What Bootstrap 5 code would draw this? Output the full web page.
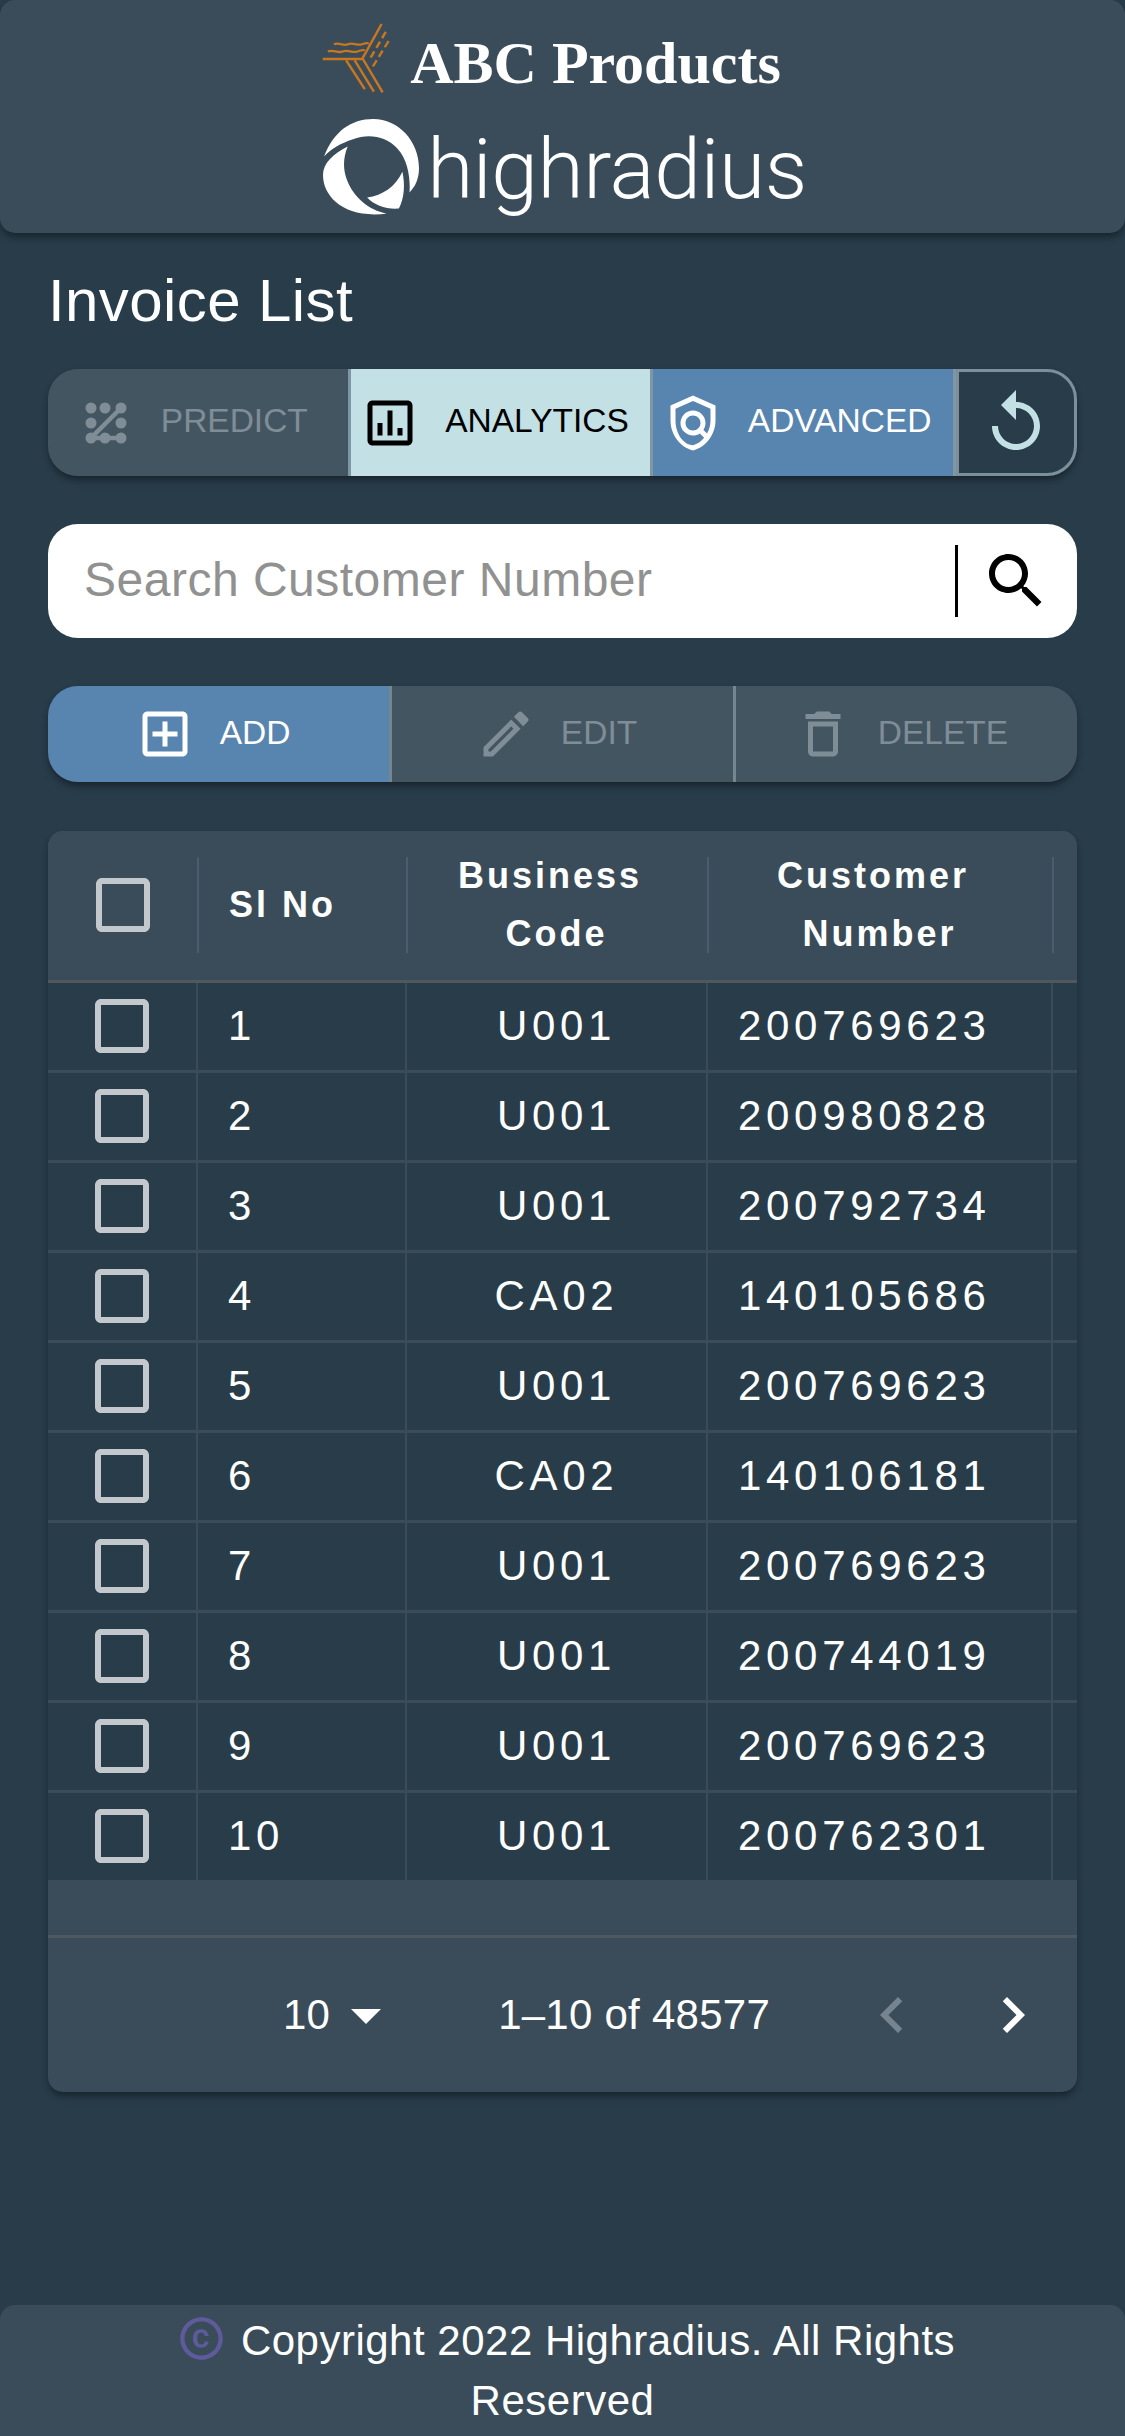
<!DOCTYPE html>
<html lang="en">
<head>
    <meta charset="UTF-8">
    <meta name="viewport" content="width=device-width, initial-scale=1">
    <title>Invoice List</title>
    <link href="https://cdn.jsdelivr.net/npm/bootstrap@5.3.2/dist/css/bootstrap.min.css" rel="stylesheet">
    <style>
        body {
            background-color: #283c4a;
            color: #fff;
            font-family: "Liberation Sans", Arial, sans-serif;
            min-height: 100vh;
        }
        .elev {
            box-shadow: 0 6px 9px -3px rgba(0, 0, 0, .35), 0 3px 6px rgba(0, 0, 0, .15);
        }

        /* header */
        .top-head {
            height: 233px;
            background-color: #3a4c5a;
            border-radius: 15px;
        }
        .abc-row {
            height: 110px;
            padding-right: 22px;
            padding-top: 23px;
            gap: 20px;
        }
        .abc-name {
            font-family: "Liberation Serif", "Times New Roman", serif;
            font-weight: 700;
            font-size: 60px;
            line-height: 1;
            margin-top: 10px;
        }
        .hr-row {
            height: 110px;
            gap: 8px;
            align-items: flex-start;
            padding-top: 9px;
            padding-left: 5px;
        }
        .hr-name {
            font-family: "Roboto", sans-serif;
            font-weight: 300;
            font-size: 84px;
            line-height: 1;
            margin-top: 9px;
            letter-spacing: -.4px;
        }

        .page-body {
            padding: 0 48px;
        }
        .page-title {
            font-size: 60px;
            font-weight: 400;
            line-height: 72px;
            letter-spacing: .4px;
            margin: 32px 0 32px;
        }

        /* button bars */
        .bar-btn {
            display: flex;
            align-items: center;
            justify-content: center;
            border: 0;
            border-radius: 0;
            padding: 0;
            font-size: 33.5px;
            line-height: 1;
            color: #fff;
        }
        .bar-btn span {
            margin-bottom: 3px;
        }
        .bar-btn svg.ico {
            width: 60px;
            height: 60px;
            margin-left: -12px;
            margin-right: 25px;
            fill: currentColor;
            flex: none;
        }
        .tool-bar {
            height: 107px;
            border-radius: 30px;
            margin-bottom: 48px;
        }
        .tool-bar .bar-btn {
            flex: 0 0 302.67px;
            border-right: 3px solid #7f97a5;
        }
        .tool-bar .bar-btn:first-child {
            border-radius: 30px 0 0 30px;
        }
        .btn-off, .btn-off:disabled {
            background-color: #445562;
            color: #7f8d97;
            opacity: 1;
        }
        .btn-light-blue {
            background-color: #c3e0e5;
            color: #000;
        }
        .btn-steel {
            background-color: #5885af;
            color: #fff;
        }
        .tool-bar .btn-reset {
            flex: 1 1 auto;
            background-color: transparent;
            border: 3px solid #7c909c;
            border-radius: 0 30px 30px 0;
            color: #c3e0e5;
        }
        .btn-reset svg {
            width: 72px;
            height: 72px;
            fill: currentColor;
        }

        .search-box {
            height: 114px;
            background-color: #fff;
            border-radius: 30px;
            margin-bottom: 48px;
        }
        .search-box .form-control {
            border: 0;
            box-shadow: none;
            background: transparent;
            padding: 0 0 3px 36px;
            font-size: 48px;
            letter-spacing: .5px;
            height: 100%;
            border-radius: 30px 0 0 30px;
        }
        .search-box .form-control::placeholder {
            color: #919191;
            opacity: 1;
        }
        .search-rule {
            flex: none;
            width: 3px;
            height: 72px;
            background-color: #000;
        }
        .search-go {
            flex: none;
            width: 119px;
            border: 0;
            padding: 0 0 0 22px;
            background: transparent;
            text-align: left;
            line-height: 0;
        }
        .search-go svg {
            width: 72px;
            height: 72px;
        }

        .action-bar {
            height: 96px;
            border-radius: 30px;
            margin-bottom: 49px;
        }
        .action-bar .bar-btn {
            flex: 1 1 0;
            border-right: 3px solid #76868f;
        }
        .action-bar .bar-btn:first-child {
            border-radius: 30px 0 0 30px;
        }
        .action-bar .bar-btn:last-child {
            border-right: 0;
            border-radius: 0 30px 30px 0;
        }

        /* invoice table */
        .grid-card {
            background-color: #3a4c5a;
            border-radius: 15px;
            overflow: hidden;
        }
        .inv-table {
            table-layout: fixed;
            width: 1240px;
            margin: 0;
            --bs-table-bg: transparent;
            --bs-table-color: #fff;
            color: #fff;
        }
        .inv-table th {
            position: relative;
            height: 150px;
            padding: 0;
            border-bottom: 3px solid #50585f;
            background-color: #3a4c5a;
            color: #fff;
            font-size: 36px;
            font-weight: 700;
            line-height: 58px;
            letter-spacing: 3px;
            text-align: center;
            vertical-align: middle;
        }
        .inv-table th::after {
            content: "";
            position: absolute;
            z-index: 1;
            right: -2px;
            top: 26px;
            height: 96px;
            width: 2px;
            background-color: #4b5d6c;
        }
        .inv-table td {
            height: 90px;
            padding: 0;
            background-color: #283c4a;
            color: #fff;
            border-bottom: 3px solid #3a4c5a;
            border-right: 2px solid #3a4c5a;
            font-size: 42px;
            line-height: 1;
            letter-spacing: 4.7px;
            vertical-align: middle;
        }
        .inv-table .cell-left {
            text-align: left;
            padding-left: 30px;
        }
        .inv-table th.cell-left {
            padding-left: 32px;
        }
        .inv-table .cell-mid {
            text-align: center;
        }
        .tick {
            display: block;
            width: 72px;
            height: 72px;
            margin: 0 auto;
            fill: #c2c8cc;
        }
        .grid-gap {
            height: 55px;
            border-bottom: 3px solid #50585f;
        }
        .pager {
            height: 154px;
            font-size: 42px;
            letter-spacing: .25px;
            padding-right: 28px;
        }
        .pager svg {
            width: 72px;
            height: 72px;
            fill: currentColor;
            flex: none;
        }
        .pager .pg-off {
            color: #75848f;
        }
        .pg-count {
            margin: 0 86px 0 96px;
        }
        .pg-gap {
            margin-left: 49px;
        }

        /* footer */
        .foot-bar {
            height: 131px;
            padding: 6px 0 0 6px;
            background-color: #3a4c5a;
            border-radius: 15px 15px 0 0;
            font-size: 42px;
            letter-spacing: .5px;
            line-height: 60px;
            text-align: center;
        }
        .foot-bar svg {
            width: 51px;
            height: 51px;
            fill: #5e5a9c;
            vertical-align: -9px;
            margin-right: 14px;
        }
        .foot-last {
            margin-left: -6px;
        }
    </style>
</head>
<body class="d-flex flex-column">
    <svg width="0" height="0" class="position-absolute">
        <symbol id="box" viewBox="0 0 24 24">
            <path d="M19 5v14H5V5h14m0-2H5c-1.1 0-2 .9-2 2v14c0 1.1.9 2 2 2h14c1.1 0 2-.9 2-2V5c0-1.1-.9-2-2-2z"/>
        </symbol>
    </svg>

    <header class="top-head elev">
        <div class="abc-row d-flex justify-content-center align-items-start">
            <svg width="68" height="70" viewBox="118 73 194 214" preserveAspectRatio="none" fill="none" stroke="#c8771f" stroke-width="7">
                <path d="M288 76 233 182"/>
                <path d="M120 183H233"/>
                <path d="M187 187 240 275M211 187 266 283M233 180 291 285"/>
                <path d="M152 138c15-8 25 7 40 0s25 6 40 0 18-2 20-4M135 160c15-8 27 7 42 0s27 6 42 0 18-3 21-5"/>
                <path d="M300 100 255 182M308 128 262 208" stroke-dasharray="22 12"/>
            </svg>
            <span class="abc-name">ABC Products</span>
        </div>
        <div class="hr-row d-flex justify-content-center">
            <svg width="96" height="98" viewBox="120 358 272 292" preserveAspectRatio="none" fill="#fff" class="flex-none">
                <path d="M123 470C150 395 200 358 262 358 335 358 392 425 392 505 392 535 382 560 365 577 368 540 362 480 330 445 300 410 250 400 205 418 170 430 140 448 123 470Z"/>
                <path d="M190 440C150 460 120 490 120 525 120 590 180 655 300 640 250 630 205 590 188 540 175 505 178 470 190 440Z"/>
                <path d="M345 515C352 550 352 590 335 625 300 628 265 615 245 592 290 585 325 560 345 515Z"/>
            </svg>
            <span class="hr-name">highradius</span>
        </div>
    </header>

    <main class="page-body">
        <h1 class="page-title">Invoice List</h1>

        <div class="tool-bar elev d-flex">
            <button class="btn bar-btn btn-off" type="button" disabled>
                <svg class="ico" viewBox="0 0 60 60">
                    <g fill="#7f8d97" stroke="none">
                        <circle cx="15" cy="15" r="5.5"/><circle cx="29" cy="15" r="5.5"/><circle cx="45" cy="15" r="5.5"/>
                        <circle cx="15" cy="30" r="5.5"/><circle cx="45" cy="30" r="5.5"/>
                        <circle cx="15" cy="45" r="5.5"/><circle cx="29" cy="45" r="5.5"/><circle cx="45" cy="45" r="5.5"/>
                    </g>
                    <path d="M45 15 15 45H45" fill="none" stroke="#7f8d97" stroke-width="4.5"/>
                </svg>
                <span>PREDICT</span>
            </button>
            <button class="btn bar-btn btn-light-blue" type="button">
                <svg class="ico" viewBox="0 0 24 24">
                    <path d="M19 5v14H5V5h14m0-2H5c-1.1 0-2 .9-2 2v14c0 1.1.9 2 2 2h14c1.1 0 2-.9 2-2V5c0-1.1-.9-2-2-2z"/>
                    <path d="M7 12h2v5H7zM11 7h2v10h-2zM15 14h2v3h-2z"/>
                </svg>
                <span>ANALYTICS</span>
            </button>
            <button class="btn bar-btn btn-steel" type="button">
                <svg class="ico" viewBox="0 0 24 24">
                    <path d="M21,5l-9-4L3,5v6c0,5.55,3.84,10.74,9,12c5.16-1.26,9-6.45,9-12V5z M19,11c0,1.85-0.51,3.65-1.38,5.21l-1.45-1.45 c1.29-1.94,1.07-4.58-0.64-6.29c-1.95-1.95-5.12-1.95-7.07,0c-1.95,1.95-1.95,5.12,0,7.07c1.71,1.71,4.35,1.92,6.29,0.64 l1.72,1.72c-1.19,1.42-2.73,2.51-4.47,3.04C7.98,20.68,5,16.05,5,11V6.3l7-3.11l7,3.11V11z M12,15c-1.66,0-3-1.34-3-3 s1.34-3,3-3s3,1.34,3,3S13.66,15,12,15z"/>
                </svg>
                <span>ADVANCED</span>
            </button>
            <button class="btn bar-btn btn-reset" type="button">
                <svg viewBox="0 0 24 24"><path d="M12 5V1L7 6l5 5V7c3.31 0 6 2.69 6 6s-2.69 6-6 6-6-2.69-6-6H4c0 4.42 3.58 8 8 8s8-3.58 8-8-3.58-8-8-8z"/></svg>
            </button>
        </div>

        <div class="search-box d-flex align-items-center">
            <input type="text" class="form-control flex-grow-1" placeholder="Search Customer Number">
            <span class="search-rule"></span>
            <button class="search-go" type="button">
                <svg viewBox="0 0 24 24"><path d="M15.5 14h-.79l-.28-.27C15.41 12.59 16 11.11 16 9.5 16 5.91 13.09 3 9.5 3S3 5.91 3 9.5 5.91 16 9.5 16c1.61 0 3.09-.59 4.23-1.57l.27.28v.79l5 4.99L20.49 19l-4.99-5zm-6 0C7.01 14 5 11.99 5 9.5S7.01 5 9.5 5 14 7.01 14 9.5 11.99 14 9.5 14z"/></svg>
            </button>
        </div>

        <div class="action-bar elev d-flex">
            <button class="btn bar-btn btn-steel" type="button">
                <svg class="ico" viewBox="0 0 24 24"><path d="M19 3H5c-1.11 0-2 .9-2 2v14c0 1.1.89 2 2 2h14c1.1 0 2-.9 2-2V5c0-1.1-.9-2-2-2zm0 16H5V5h14v14zm-8-2h2v-4h4v-2h-4V7h-2v4H7v2h4z"/></svg>
                <span>ADD</span>
            </button>
            <button class="btn bar-btn btn-off" type="button" disabled>
                <svg class="ico" viewBox="0 0 24 24"><path d="M3 17.25V21h3.75L17.81 9.94l-3.75-3.75L3 17.25zM5.92 19H5v-.92l9.06-9.06.92.92L5.92 19zM20.71 5.63l-2.34-2.34c-.2-.2-.45-.29-.71-.29s-.51.1-.7.29l-1.83 1.83 3.75 3.75 1.83-1.83c.39-.39.39-1.02 0-1.41z"/></svg>
                <span>EDIT</span>
            </button>
            <button class="btn bar-btn btn-off" type="button" disabled>
                <svg class="ico" viewBox="0 0 24 24"><path d="M6 19c0 1.1.9 2 2 2h8c1.1 0 2-.9 2-2V7H6v12zM8 9h8v10H8V9zm7.5-5l-1-1h-5l-1 1H5v2h14V4z"/></svg>
                <span>DELETE</span>
            </button>
        </div>

        <div class="grid-card elev">
            <table class="table inv-table">
                <colgroup>
                    <col style="width:149px"><col style="width:209px"><col style="width:301px"><col style="width:345px"><col>
                </colgroup>
                <thead>
                    <tr>
                        <th><svg class="tick"><use href="#box"/></svg></th>
                        <th class="cell-left">Sl No</th>
                        <th>Business&nbsp;<br>Code</th>
                        <th>Customer&nbsp;<br>Number</th>
                        <th></th>
                    </tr>
                </thead>
                <tbody id="rows"></tbody>
            </table>
            <div class="grid-gap"></div>
            <div class="pager d-flex align-items-center justify-content-end">
                <span>10</span>
                <svg class="pg-drop" viewBox="0 0 24 24"><path d="M7 10l5 5 5-5z"/></svg>
                <span class="pg-count">1–10 of 48577</span>
                <svg class="pg-off" viewBox="0 0 24 24"><path d="M15.41 16.59 10.83 12l4.58-4.59L14 6l-6 6 6 6 1.41-1.41z"/></svg>
                <svg class="pg-gap" viewBox="0 0 24 24"><path d="M8.59 16.59 13.17 12 8.59 7.41 10 6l6 6-6 6-1.41-1.41z"/></svg>
            </div>
        </div>
    </main>

    <footer class="foot-bar mt-auto">
        <svg viewBox="0 0 24 24"><path d="M11.88 9.14c1.28.06 1.61 1.15 1.63 1.66h1.79c-.08-1.98-1.49-3.19-3.45-3.19C9.64 7.61 8 9 8 12.14c0 1.94.93 4.24 3.84 4.24 2.22 0 3.41-1.65 3.44-2.95h-1.79c-.03.59-.45 1.38-1.63 1.44-1.31-.04-1.86-1.06-1.86-2.73 0-2.89 1.28-2.98 1.88-3zM12 2C6.48 2 2 6.48 2 12s4.48 10 10 10 10-4.48 10-10S17.52 2 12 2zm0 18c-4.41 0-8-3.59-8-8s3.59-8 8-8 8 3.59 8 8-3.59 8-8 8z"/></svg>Copyright 2022 Highradius. All Rights<br><span class="foot-last">Reserved</span>
    </footer>

    <script src="https://cdn.jsdelivr.net/npm/bootstrap@5.3.2/dist/js/bootstrap.bundle.min.js"></script>
    <script>
        // Fills the invoice rows
        const invoices = [
            ["U001", "200769623"], ["U001", "200980828"], ["U001", "200792734"], ["CA02", "140105686"],
            ["U001", "200769623"], ["CA02", "140106181"], ["U001", "200769623"], ["U001", "200744019"],
            ["U001", "200769623"], ["U001", "200762301"]
        ];
        const rows = document.getElementById("rows");
        invoices.forEach((invoice, index) => {
            const row = document.createElement("tr");
            row.innerHTML = `<td><svg class="tick"><use href="#box"/></svg></td>
                <td class="cell-left">${index + 1}</td>
                <td class="cell-mid">${invoice[0]}</td>
                <td class="cell-left">${invoice[1]}</td>
                <td></td>`;
            rows.appendChild(row);
        });
    </script>
</body>
</html>
